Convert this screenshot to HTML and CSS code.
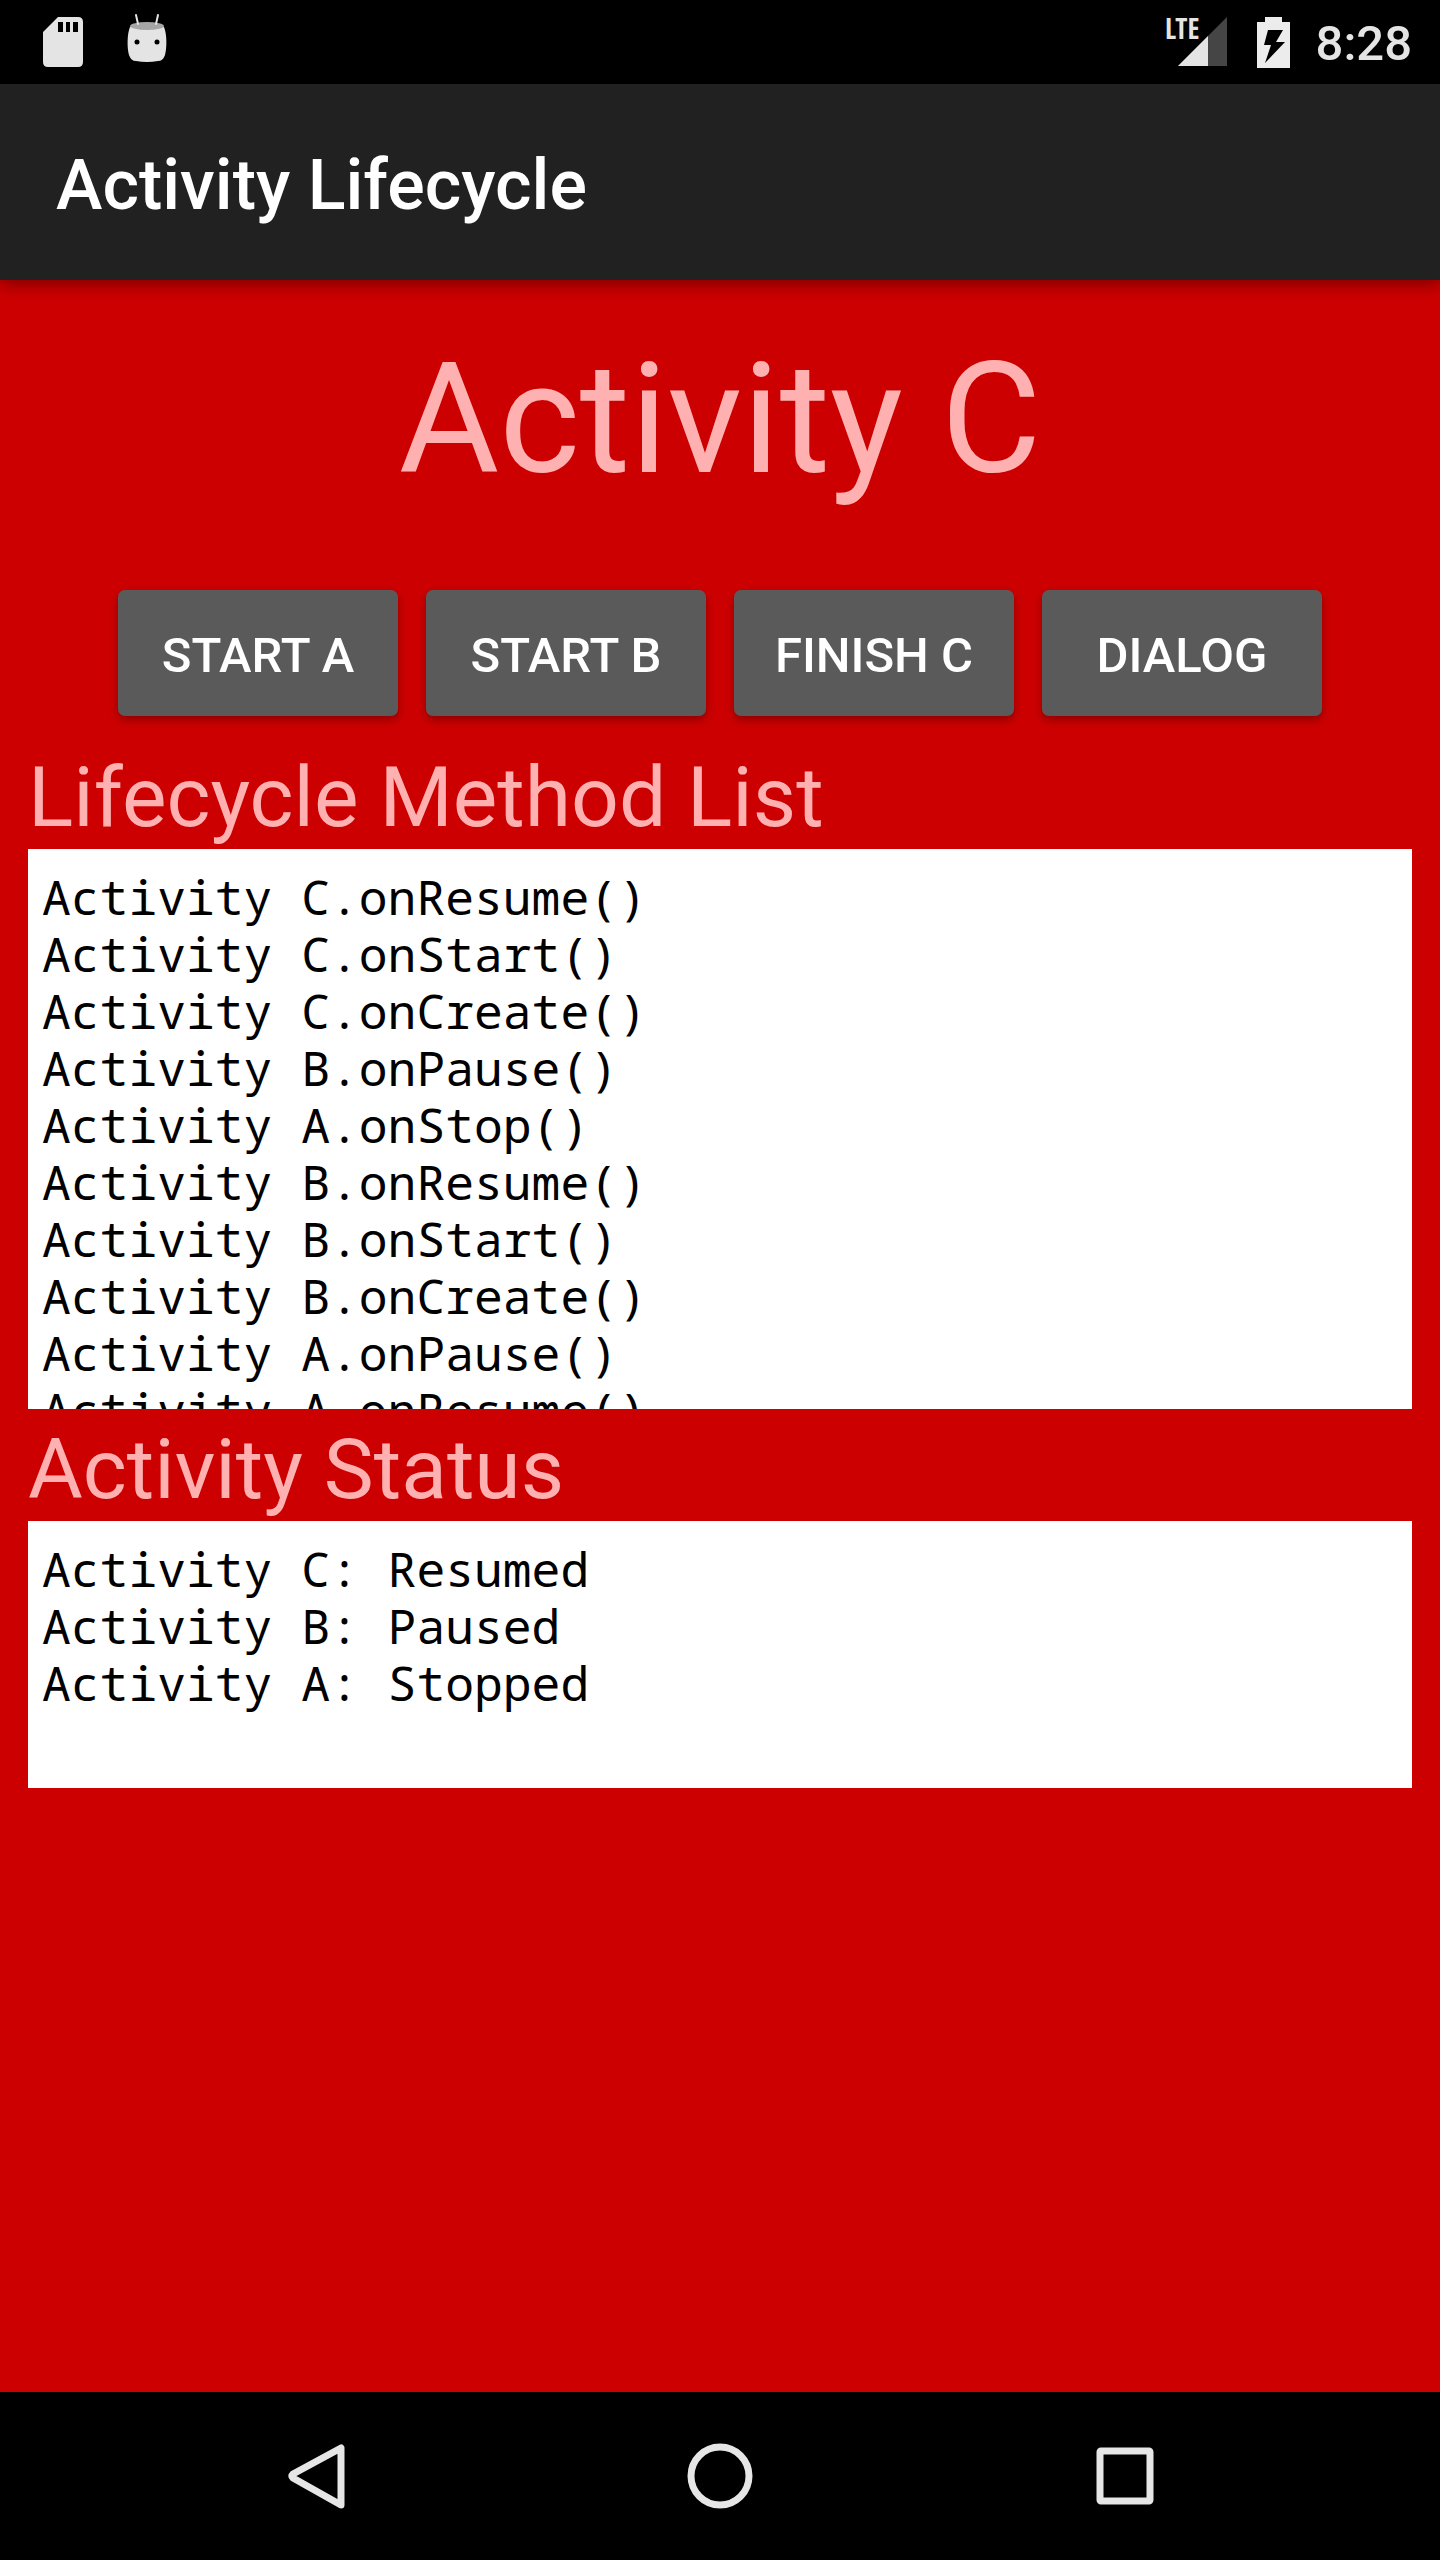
FILE: index.html
```html
<!DOCTYPE html>
<html lang="en">
<head>
  <meta charset="utf-8">
  <meta name="viewport" content="width=device-width, initial-scale=1">
  <title>Activity Lifecycle</title>
  <link rel="stylesheet" href="styles.css">
</head>
<body>
  <div class="screen">
    <div class="status-bar">
      <div class="notifications">
        <svg class="icon-sd" viewBox="0 0 40 50" role="img" aria-label="SD card">
          <path fill="#e4e4e4" fill-rule="evenodd" d="M15 0H35Q40 0 40 5V45Q40 50 35 50H5Q0 50 0 45V15ZM15 5V15H20V5ZM23 5V15H27V5ZM30 5V15H35V5Z"/>
        </svg>
        <svg class="icon-droid" viewBox="0 0 40 50" role="img" aria-label="Android">
          <path fill="#e4e4e4" d="M3 10Q20 6 37 10C40 17 40 31 38 38Q36 44 31 44Q20 46 9 44Q4 44 2 38C0 31 0 17 3 10Z"/>
          <ellipse cx="20" cy="9" rx="17" ry="4" fill="#a6a6a6"/>
          <path stroke="#e4e4e4" stroke-width="2" stroke-linecap="round" d="M9 -2L11 7M31 -2L29 7"/>
          <circle cx="10" cy="25" r="2.5"/>
          <circle cx="30" cy="25" r="2.5"/>
        </svg>
      </div>
      <div class="indicators">
        <svg class="icon-signal" viewBox="0 0 65 50" role="img" aria-label="LTE signal">
          <path fill="#454545" d="M61 0V49H12Z"/>
          <path fill="#e4e4e4" d="M42 19V49H12Z"/>
          <text class="network" x="-1" y="22">LTE</text>
        </svg>
        <svg class="icon-battery" viewBox="0 0 33 51" role="img" aria-label="Battery charging">
          <path fill="#ececec" fill-rule="evenodd" d="M8 0H25V5H33V51H0V5H8ZM11 13L7 28H14L8 46L28 25H19L26 13Z"/>
        </svg>
        <time class="clock">8:28</time>
      </div>
    </div>

    <header class="app-bar">
      <h1 class="app-title">Activity Lifecycle</h1>
    </header>

    <main class="content">
      <h2 class="activity-name">Activity C</h2>
      <div class="actions">
        <button class="action" type="button">START A</button>
        <button class="action" type="button">START B</button>
        <button class="action" type="button">FINISH C</button>
        <button class="action" type="button">DIALOG</button>
      </div>
      <section>
        <h3 class="label">Lifecycle Method List</h3>
        <ul class="log log-methods">
          <li>Activity C.onResume()</li>
          <li>Activity C.onStart()</li>
          <li>Activity C.onCreate()</li>
          <li>Activity B.onPause()</li>
          <li>Activity A.onStop()</li>
          <li>Activity B.onResume()</li>
          <li>Activity B.onStart()</li>
          <li>Activity B.onCreate()</li>
          <li>Activity A.onPause()</li>
          <li>Activity A.onResume()</li>
        </ul>
      </section>
      <section>
        <h3 class="label">Activity Status</h3>
        <ul class="log log-status">
          <li>Activity C: Resumed</li>
          <li>Activity B: Paused</li>
          <li>Activity A: Stopped</li>
        </ul>
      </section>
    </main>

    <nav class="nav-bar">
      <button class="nav-button" type="button" aria-label="Back">
        <svg class="nav-icon" viewBox="0 0 66 66"><path d="M59 5V62L11 35Q9 33 11 31Z"/></svg>
      </button>
      <button class="nav-button" type="button" aria-label="Home">
        <svg class="nav-icon" viewBox="0 0 66 66"><circle cx="33" cy="33" r="29"/></svg>
      </button>
      <button class="nav-button" type="button" aria-label="Recent apps">
        <svg class="nav-icon" viewBox="0 0 66 66"><rect x="8" y="8" width="50" height="50" rx="1"/></svg>
      </button>
    </nav>
  </div>
</body>
</html>
```
FILE: styles.css
```css
* {
  box-sizing: border-box;
}

body {
  margin: 0;
  background: #cc0000;
  font-family: Roboto, "Liberation Sans", sans-serif;
}

h1, h2, h3, ul {
  margin: 0;
  padding: 0;
}

button {
  margin: 0;
  border: 0;
  font-family: inherit;
}

.screen {
  display: flex;
  flex-direction: column;
  min-height: 100vh;
}

/* Status bar */
.status-bar {
  display: flex;
  justify-content: space-between;
  align-items: center;
  height: 84px;
  padding: 0 28px 0 43px;
  background: #000;
}

.notifications {
  display: flex;
  gap: 44px;
}

.indicators {
  display: flex;
  align-items: center;
  gap: 26px;
}

.icon-sd,
.icon-droid {
  width: 40px;
  height: 50px;
  overflow: visible;
}

.icon-signal {
  width: 65px;
  height: 50px;
  overflow: visible;
}

.icon-battery {
  width: 33px;
  height: 51px;
}

.network {
  fill: #e4e4e4;
  font: bold 28px "Liberation Sans Narrow", "Open Sans Condensed", Roboto, sans-serif;
}

.clock {
  padding-top: 4px;
  color: #e4e4e4;
  font-size: 49px;
  font-weight: 500;
  line-height: 56px;
}

/* App bar */
.app-bar {
  position: relative;
  display: flex;
  align-items: center;
  height: 196px;
  padding: 6px 56px 0;
  background: #212121;
  box-shadow: 0 4px 16px rgba(0, 0, 0, 0.4);
}

.app-title {
  color: #fff;
  font-size: 70px;
  font-weight: 500;
  line-height: 84px;
}

/* Content */
.content {
  flex: 1;
  padding: 50px 28px 28px;
}

.activity-name {
  margin-bottom: 80px;
  color: #ffb0b0;
  font-size: 154px;
  font-weight: 400;
  line-height: 180px;
  text-align: center;
}

.actions {
  display: flex;
  justify-content: center;
  gap: 28px;
  margin-bottom: 21px;
}

.action {
  width: 280px;
  height: 126px;
  padding: 6px 0 0;
  border-radius: 7px;
  background: #5a5a5b;
  color: #fff;
  font-size: 49px;
  font-weight: 500;
  line-height: 56px;
  box-shadow: 0 4px 8px rgba(0, 0, 0, 0.3);
}

.label {
  padding-top: 10px;
  color: #ffb0b0;
  font-size: 84px;
  font-weight: 400;
  line-height: 102px;
}

.log {
  overflow: hidden;
  padding: 19px 14px;
  background: #fff;
  color: #000;
  font-family: "Noto Sans Mono", "DejaVu Sans Mono", monospace;
  font-size: 48px;
  line-height: 57px;
  list-style: none;
}

.log-methods {
  height: 560px;
}

.log-status {
  min-height: 267px;
}

/* Navigation bar */
.nav-bar {
  display: grid;
  grid-template-columns: repeat(3, 1fr);
  height: 168px;
  padding: 0 112px;
  background: #000;
}

.nav-button {
  display: flex;
  justify-content: center;
  align-items: center;
  padding: 0;
  background: none;
}

.nav-icon {
  width: 66px;
  height: 66px;
  fill: none;
  stroke: #e6e6e6;
  stroke-width: 7;
  stroke-linejoin: round;
}
```
